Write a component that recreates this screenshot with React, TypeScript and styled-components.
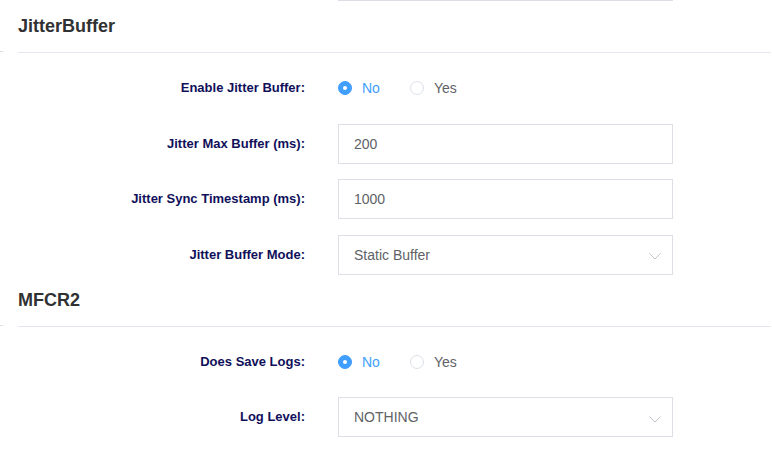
import React from "react";
import styled, { createGlobalStyle } from "styled-components";

type Option = { label: string; checked?: boolean };

type Field =
  | { kind: "radio"; label: string; options: Option[] }
  | { kind: "input"; label: string; value: string }
  | { kind: "select"; label: string; value: string };

type Section = { title: string; fields: Field[] };

const yesNo = (): Option[] => [{ label: "No", checked: true }, { label: "Yes" }];

const sections: Section[] = [
  {
    title: "JitterBuffer",
    fields: [
      { kind: "radio", label: "Enable Jitter Buffer:", options: yesNo() },
      { kind: "input", label: "Jitter Max Buffer (ms):", value: "200" },
      { kind: "input", label: "Jitter Sync Timestamp (ms):", value: "1000" },
      { kind: "select", label: "Jitter Buffer Mode:", value: "Static Buffer" },
    ],
  },
  {
    title: "MFCR2",
    fields: [
      { kind: "radio", label: "Does Save Logs:", options: yesNo() },
      { kind: "select", label: "Log Level:", value: "NOTHING" },
    ],
  },
];

function Chevron(): React.ReactElement {
  return (
    <ArrowIcon width="12" height="7" viewBox="0 0 12 7">
      <polyline points="0.5,0.5 6,6 11.5,0.5" fill="none" stroke="#c0c4cc" strokeWidth="1" />
    </ArrowIcon>
  );
}

function Control({ field }: { field: Field }): React.ReactElement {
  if (field.kind === "radio") {
    return (
      <RadioGroup>
        {field.options.map((o) => (
          <RadioItem key={o.label} $checked={!!o.checked}>
            <RadioDot $checked={!!o.checked} />
            {o.label}
          </RadioItem>
        ))}
      </RadioGroup>
    );
  }
  return (
    <InputBox>
      <InputText>{field.value}</InputText>
      {field.kind === "select" && <Chevron />}
    </InputBox>
  );
}

function App(): React.ReactElement {
  return (
    <Page>
      <GlobalStyle />
      {/* tail of the row above, scrolled mostly out of view */}
      <Row>
        <Label />
        <InputBox />
      </Row>
      {sections.map((s) => (
        <React.Fragment key={s.title}>
          <SectionHeader>
            <Stub />
            <Title>{s.title}</Title>
          </SectionHeader>
          <Fields>
            {s.fields.map((f) => (
              <Row key={f.label}>
                <Label>{f.label}</Label>
                <Control field={f} />
              </Row>
            ))}
          </Fields>
        </React.Fragment>
      ))}
    </Page>
  );
}

export default App;

const GlobalStyle = createGlobalStyle`
  html, body {
    margin: 0;
    padding: 0;
    background: #fff;
    overflow: hidden;
  }
  body {
    font-family: "Liberation Sans", Arial, sans-serif;
  }
`;

const Page = styled.div`
  width: 772px;
  margin-top: -39px;
  padding-right: 1px;
  box-sizing: border-box;
`;

const SectionHeader = styled.div`
  display: flex;
  align-items: flex-end;
`;

const Stub = styled.div`
  width: 3px;
  height: 1px;
  margin-bottom: 1px;
  background: #dcdfe6;
`;

const Title = styled.h2`
  flex: 1;
  margin: 0 0 0 15px;
  padding: 15px 0 16px;
  font-size: 18px;
  line-height: 20px;
  font-weight: bold;
  color: #303133;
  border-bottom: 1px solid #e4e7ed;
`;

const Fields = styled.div`
  display: flex;
  flex-direction: column;
  gap: 15.5px;
  padding-top: 15px;
`;

const Row = styled.div`
  display: grid;
  grid-template-columns: 305px 335px;
  column-gap: 33px;
  height: 40px;
  align-items: center;
`;

const Label = styled.label`
  text-align: right;
  font-size: 13px;
  font-weight: bold;
  color: #10105a;
  line-height: 40px;
  white-space: nowrap;
`;

const RadioGroup = styled.div`
  display: flex;
  align-items: center;
  gap: 30px;
`;

const RadioItem = styled.span<{ $checked: boolean }>`
  display: inline-flex;
  align-items: center;
  gap: 10px;
  font-size: 14px;
  color: ${(p) => (p.$checked ? "#409eff" : "#606266")};
`;

const RadioDot = styled.span<{ $checked: boolean }>`
  width: 14px;
  height: 14px;
  box-sizing: border-box;
  border-radius: 50%;
  border: 1px solid ${(p) => (p.$checked ? "#409eff" : "#dcdfe6")};
  background: ${(p) => (p.$checked ? "#409eff" : "#fff")};
  display: flex;
  align-items: center;
  justify-content: center;

  &::after {
    content: "";
    width: 4px;
    height: 4px;
    border-radius: 50%;
    background: #fff;
  }
`;

const InputBox = styled.div`
  height: 40px;
  box-sizing: border-box;
  border: 1px solid #dcdfe6;
  background: #fff;
  display: flex;
  align-items: center;
  padding: 0 11px 0 15px;
`;

const InputText = styled.span`
  flex: 1;
  font-size: 14px;
  color: #606266;
`;

const ArrowIcon = styled.svg`
  display: block;
  margin-top: 4px;
`;
